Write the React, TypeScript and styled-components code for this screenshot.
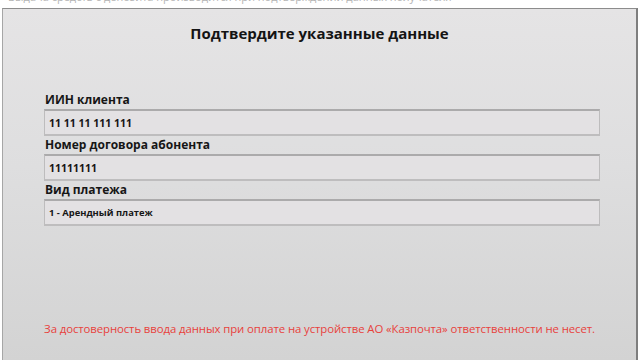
import React from 'react';
import styled, { createGlobalStyle } from 'styled-components';

const GlobalStyle = createGlobalStyle`
  html, body {
    margin: 0;
    padding: 0;
    width: 640px;
    height: 360px;
    overflow: hidden;
    background: #ffffff;
    font-family: "Open Sans", "Noto Sans", sans-serif;
  }
  #root {
    height: 360px;
  }
`;

const Screen = styled.div`
  height: 360px;
  display: flex;
  flex-direction: column;
  background: #ffffff;
`;

const TopStrip = styled.div`
  height: 8px;
  overflow: hidden;
  padding-left: 8px;
  background: #ffffff;
`;

const TopText = styled.div`
  margin-top: -9px;
  font-size: 11px;
  line-height: 12px;
  color: #b5b5b5;
  white-space: nowrap;
`;

const Window = styled.div`
  flex: 1;
  margin: 0 2px 0 2px;
  border-top: 1px solid #8c8c8c;
  border-left: 1px solid #a6a6a6;
  border-right: 2px solid #7e7e7e;
  background: linear-gradient(180deg, #e5e4e5 0%, #dededf 45%, #d3d3d3 100%);
  display: flex;
  flex-direction: column;
`;

const Title = styled.h1`
  margin: 0;
  height: 48px;
  line-height: 48px;
  text-align: center;
  font-size: 15px;
  font-weight: 700;
  color: #141414;
`;

const Form = styled.div`
  margin-top: 34px;
  padding: 0 36px 0 41px;
  display: flex;
  flex-direction: column;
`;

const Label = styled.div`
  height: 18px;
  line-height: 18px;
  font-size: 12px;
  font-weight: 700;
  color: #161616;
  padding-left: 1px;
`;

const Field = styled.div<{ $small?: boolean }>`
  height: 27px;
  box-sizing: border-box;
  display: flex;
  align-items: center;
  padding-left: 4px;
  background: #e3e1e3;
  border: 1px solid #bdbcbd;
  border-top: 2px solid #abaaab;
  border-bottom: 2px solid #bebdbe;
  font-size: ${(p) => (p.$small ? '9.4px' : '10.5px')};
  font-weight: 700;
  color: #161616;
`;

const Footer = styled.div`
  margin-top: auto;
  padding-bottom: 23px;
  text-align: center;
  font-size: 11.4px;
  line-height: 16px;
  color: #e8413c;
  letter-spacing: -0.1px;
  white-space: nowrap;
`;

const fields = [
  { label: 'ИИН клиента', value: '11 11 11 111 111' },
  { label: 'Номер договора абонента', value: '11111111' },
  { label: 'Вид платежа', value: '1 - Арендный платеж', small: true },
];

export default function App() {
  return (
    <>
      <GlobalStyle />
      <Screen>
        <TopStrip>
          <TopText>Выдача средств с депозита производится при подтверждении данных получателя</TopText>
        </TopStrip>
        <Window>
          <Title>Подтвердите указанные данные</Title>
          <Form>
            {fields.map((f) => (
              <React.Fragment key={f.label}>
                <Label>{f.label}</Label>
                <Field $small={f.small}>{f.value}</Field>
              </React.Fragment>
            ))}
          </Form>
          <Footer>
            За достоверность ввода данных при оплате на устройстве АО «Казпочта» ответственности не несет.
          </Footer>
        </Window>
      </Screen>
    </>
  );
}
